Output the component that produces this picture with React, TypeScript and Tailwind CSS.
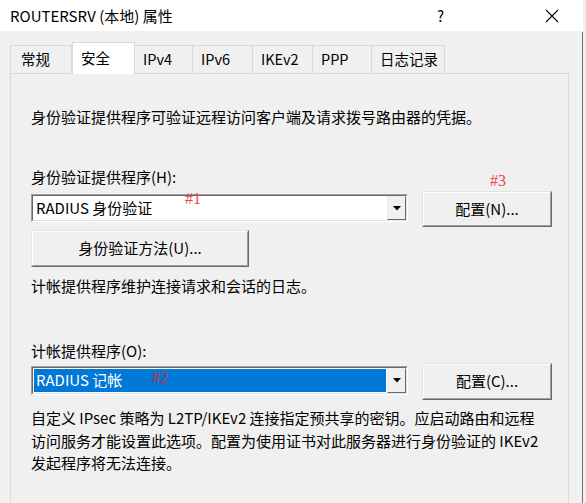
import React from "react";

const font = "font-['Noto_Sans_CJK_SC','Noto_Sans_CJK_JP',sans-serif]";

const tabs = [
  { label: "常规", w: "w-[62px]", pl: "pl-[10px]" },
  { label: "安全", w: "w-[63px]", pl: "pl-[8px]", active: true },
  { label: "IPv4", w: "w-[58px]", pl: "pl-[8px]" },
  { label: "IPv6", w: "w-[60px]", pl: "pl-[8px]" },
  { label: "IKEv2", w: "w-[60px]", pl: "pl-[8px]" },
  { label: "PPP", w: "w-[59px]", pl: "pl-[8px]" },
  { label: "日志记录", w: "w-[73px]", pl: "pl-[8px]" },
];

function Arrow() {
  return (
    <svg width="8" height="5" viewBox="0 0 8 5">
      <path d="M0 0H8L4 4.5Z" fill="#000" />
    </svg>
  );
}

function Combo({ text, selected, h }: { text: string; selected?: boolean; h: string }) {
  return (
    <div className={`flex ${h} w-[377px] border border-t-[#a0a0a0] border-l-[#a0a0a0] border-b-white border-r-white`}>
      <div className="flex flex-1 border border-t-[#696969] border-l-[#696969] border-b-[#e3e3e3] border-r-[#e3e3e3] bg-white">
        <div className="flex-1 p-[1px]">
          <div
            className={
              selected
                ? "flex h-full items-center bg-[#0078d7] pl-[2px] text-white"
                : "flex h-full items-center pl-[2px]"
            }
          >
            {text}
          </div>
        </div>
        <div className="flex w-[19px] items-center justify-center border border-t-[#f0f0f0] border-l-[#f0f0f0] border-b-[#696969] border-r-[#696969] bg-[#f0f0f0]">
          <Arrow />
        </div>
      </div>
    </div>
  );
}

function Button({ children, w, h }: { children: React.ReactNode; w: string; h: string }) {
  return (
    <div className={`${w} ${h} border border-t-[#e3e3e3] border-l-[#e3e3e3] border-b-[#696969] border-r-[#696969]`}>
      <div className="flex h-full items-center justify-center border border-t-white border-l-white border-b-[#a0a0a0] border-r-[#a0a0a0] bg-[#f0f0f0]">
        {children}
      </div>
    </div>
  );
}

function Mark({ children, className }: { children: React.ReactNode; className: string }) {
  return (
    <span className={`absolute font-['Liberation_Serif',serif] text-[16px] leading-none ${className}`}>
      {children}
    </span>
  );
}

export default function App() {
  return (
    <div className={`relative flex h-[503px] w-[586px] overflow-hidden bg-white text-[15px] text-black ${font}`}>
      <div className="flex w-[582px] flex-col bg-[#f0f0f0]">
        {/* title bar */}
        <div className="flex h-[31px] shrink-0 items-center bg-white pl-[10px]">
          <span className="text-[15px] leading-none">ROUTERSRV (本地) 属性</span>
          <span className="ml-auto text-[15px] leading-none">?</span>
          <span className="ml-[101px] mr-[23px] flex items-center">
            <svg width="14" height="14" viewBox="0 0 14 14">
              <path d="M1 1L13 13M13 1L1 13" stroke="#000" strokeWidth="1.1" />
            </svg>
          </span>
        </div>

        {/* tabs */}
        <div className="relative z-10 mt-[11px] flex h-[31px] items-end pl-[10px] text-[14.5px]">
          {tabs.map((t, i) =>
            t.active ? (
              <div
                key={t.label}
                className={`${t.w} ${t.pl} mb-[-1px] h-[32px] border border-b-0 border-[#d9d9d9] bg-white pt-[5px] leading-[20px]`}
              >
                {t.label}
              </div>
            ) : (
              <div
                key={t.label}
                className={`${t.w} ${t.pl} h-[28px] border border-b-0 border-[#d9d9d9] bg-[#f0f0f0] pt-[3px] leading-[20px] ${
                  i > 0 ? "border-l-0" : ""
                }`}
              >
                {t.label}
              </div>
            )
          )}
        </div>

        {/* panel */}
        <div className="relative ml-[10px] flex w-[559px] flex-1 flex-col border border-b-0 border-[#d9d9d9] bg-[#f0f0f0] pl-[20px] pt-[32px]">
          <div className="leading-[22px]">身份验证提供程序可验证远程访问客户端及请求拨号路由器的凭据。</div>

          <div className="mt-[38px] leading-[22px]">身份验证提供程序(H):</div>
          <div className="mt-[3px] flex items-start gap-[14px]">
            <div className="mt-[3px]">
              <Combo text="RADIUS 身份验证" h="h-[28px]" />
            </div>
            <Button w="w-[130px]" h="h-[36px]">配置(N)...</Button>
          </div>
          <div className="mt-[3px]">
            <Button w="w-[218px]" h="h-[37px]">身份验证方法(U)...</Button>
          </div>

          <div className="mt-[8px] leading-[22px]">计帐提供程序维护连接请求和会话的日志。</div>

          <div className="mt-[43px] leading-[22px]">计帐提供程序(O):</div>
          <div className="mt-[1px] flex items-start gap-[14px]">
            <div className="mt-[3px]">
              <Combo text="RADIUS 记帐" selected h="h-[29px]" />
            </div>
            <Button w="w-[130px]" h="h-[37px]">配置(C)...</Button>
          </div>

          <div className="mt-[7px] leading-[22.5px]">
            自定义 IPsec 策略为 L2TP/IKEv2 连接指定预共享的密钥。应启动路由和远程
            <br />
            访问服务才能设置此选项。配置为使用证书对此服务器进行身份验证的 IKEv2
            <br />
            发起程序将无法连接。
          </div>
        </div>
      </div>

      {/* edge of the window behind */}
      <div className="mt-[32px] w-[1px] bg-[#707070]" />
      <div className="w-[3px] bg-[#f0f0f0]" />

      {/* annotations */}
      <Mark className="left-[185px] top-[191px] text-[#e8474b]">#1</Mark>
      <Mark className="left-[490px] top-[173px] text-[#e8474b]">#3</Mark>
      <Mark className="left-[152px] top-[370px] text-[#c8303a]">#2</Mark>
    </div>
  );
}
